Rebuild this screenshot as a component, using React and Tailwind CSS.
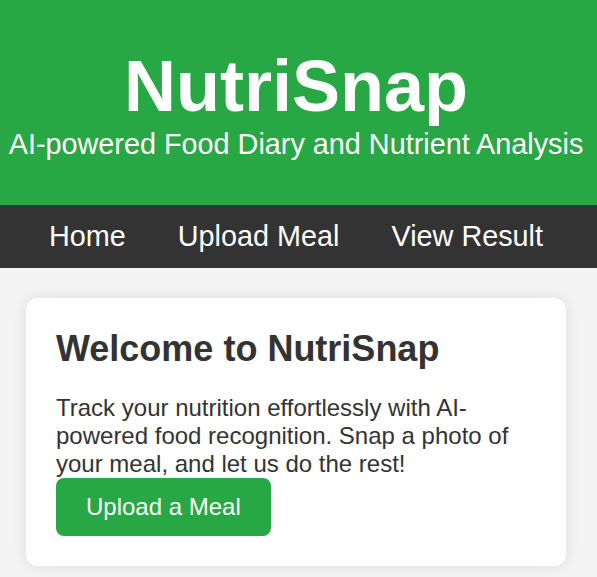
import React from 'react';

const links = ['Home', 'Upload Meal', 'View Result'];

const App = () => {
  return (
    <div className="min-h-[577px] bg-[#f4f4f4] pr-[5px] font-['Liberation_Sans',Arial,sans-serif] leading-[normal] text-[#333]">
      {/* Header */}
      <header className="-mr-[5px] bg-[#28a745] pt-[50px] pr-[5px] pb-[46px] text-center text-white">
        <h1 className="text-[72px] font-bold leading-none">NutriSnap</h1>
        <p className="mt-[8px] text-[28.8px] leading-none">
          AI-powered Food Diary and Nutrient Analysis
        </p>
      </header>

      {/* Nav */}
      <nav className="-mr-[5px] flex h-[63px] items-center justify-center gap-[52px] bg-[#333] pr-[5px]">
        {links.map((link) => (
          <a key={link} href="#" className="text-[28.8px] text-white">
            {link}
          </a>
        ))}
      </nav>

      {/* Card */}
      <main className="pt-[30px] pb-[12px]">
        <section className="mx-auto w-[540px] rounded-xl bg-white p-[30px] shadow-[0_0_15px_rgba(0,0,0,0.1)]">
          <h2 className="mb-[24px] text-[36px] font-bold">Welcome to NutriSnap</h2>
          <p className="text-[24px]">
            Track your nutrition effortlessly with AI-powered food recognition. Snap a photo of
            your meal, and let us do the rest!
          </p>
          <button
            type="button"
            className="rounded-[8px] bg-[#28a745] px-[30px] py-[15px] text-[24px] text-white"
          >
            Upload a Meal
          </button>
        </section>
      </main>
    </div>
  );
};

export default App;
